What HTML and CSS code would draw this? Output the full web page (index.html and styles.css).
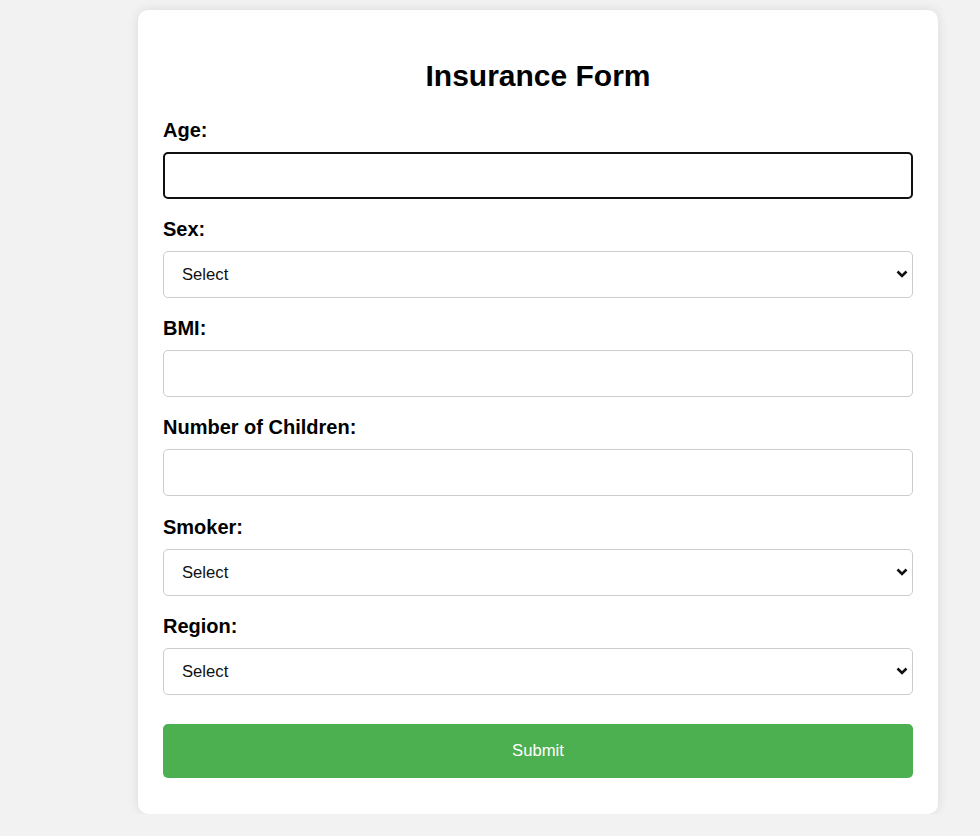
FILE: index.html
```html
<!DOCTYPE html>
<html lang="en">
<head>
<meta charset="utf-8">
<title>Insurance Form</title>
<link rel="stylesheet" href="styles.css">
</head>
<body>
<div class="card">
  <h2 class="title">Insurance Form</h2>
  <form class="form">
    <label class="label" for="age">Age:</label>
    <input class="field focused" id="age" type="text">

    <label class="label" for="sex">Sex:</label>
    <div class="select-wrap">
      <select class="field select" id="sex"><option>Select</option><option>Male</option><option>Female</option></select>
      <svg class="chevron" width="12" height="8" viewBox="0 0 12 8"><path d="M1.5 1.5 L6 6 L10.5 1.5" fill="none" stroke="#111" stroke-width="2.6"/></svg>
    </div>

    <label class="label" for="bmi">BMI:</label>
    <input class="field" id="bmi" type="text">

    <label class="label" for="children">Number of Children:</label>
    <input class="field" id="children" type="text">

    <label class="label" for="smoker">Smoker:</label>
    <div class="select-wrap">
      <select class="field select" id="smoker"><option>Select</option><option>Yes</option><option>No</option></select>
      <svg class="chevron" width="12" height="8" viewBox="0 0 12 8"><path d="M1.5 1.5 L6 6 L10.5 1.5" fill="none" stroke="#111" stroke-width="2.6"/></svg>
    </div>

    <label class="label" for="region">Region:</label>
    <div class="select-wrap">
      <select class="field select" id="region"><option>Select</option><option>Northeast</option><option>Northwest</option><option>Southeast</option><option>Southwest</option></select>
      <svg class="chevron" width="12" height="8" viewBox="0 0 12 8"><path d="M1.5 1.5 L6 6 L10.5 1.5" fill="none" stroke="#111" stroke-width="2.6"/></svg>
    </div>

    <button class="submit" type="button">Submit</button>
  </form>
</div>
</body>
</html>
```

FILE: styles.css
```css
html, body {
  margin: 0;
  padding: 0;
}
body {
  background: #f2f2f2;
  font-family: "Liberation Sans", Arial, sans-serif;
  color: #000;
}
.card {
  box-sizing: border-box;
  width: 800px;
  margin: 10px 0 0 138px;
  padding: 25px 25px 25px;
  background: #fff;
  border-radius: 10px;
  box-shadow: 0 0 12px rgba(0, 0, 0, 0.1);
}
.title {
  margin: 24px 0 25px;
  font-size: 30px;
  line-height: 34.5px;
  font-weight: bold;
  text-align: center;
}
.form {
  display: flex;
  flex-direction: column;
}
.label {
  display: block;
  font-size: 20px;
  line-height: 23px;
  font-weight: bold;
  margin-bottom: 10px;
}
.field {
  box-sizing: border-box;
  width: 100%;
  height: 47px;
  margin: 0 0 19.25px;
  padding: 0 12.5px;
  border: 1px solid #ccc;
  border-radius: 5px;
  background: #fff;
  font-family: "Liberation Sans", Arial, sans-serif;
  font-size: 16.67px;
  color: #111;
  outline: none;
}
.field.focused {
  border: 2px solid #101010;
  padding: 0 11.5px;
}
.select-wrap {
  position: relative;
}
.select {
  -webkit-appearance: none;
  appearance: none;
  padding-left: 18px;
  display: block;
}
.chevron {
  position: absolute;
  right: 5px;
  top: 19px;
  pointer-events: none;
}
.submit {
  height: 54px;
  margin: 9.75px 0 11px;
  padding: 1px 0 0;
  border: none;
  border-radius: 5px;
  background: #4caf50;
  color: #fff;
  font-family: "Liberation Sans", Arial, sans-serif;
  font-size: 16.67px;
  cursor: pointer;
}
```
